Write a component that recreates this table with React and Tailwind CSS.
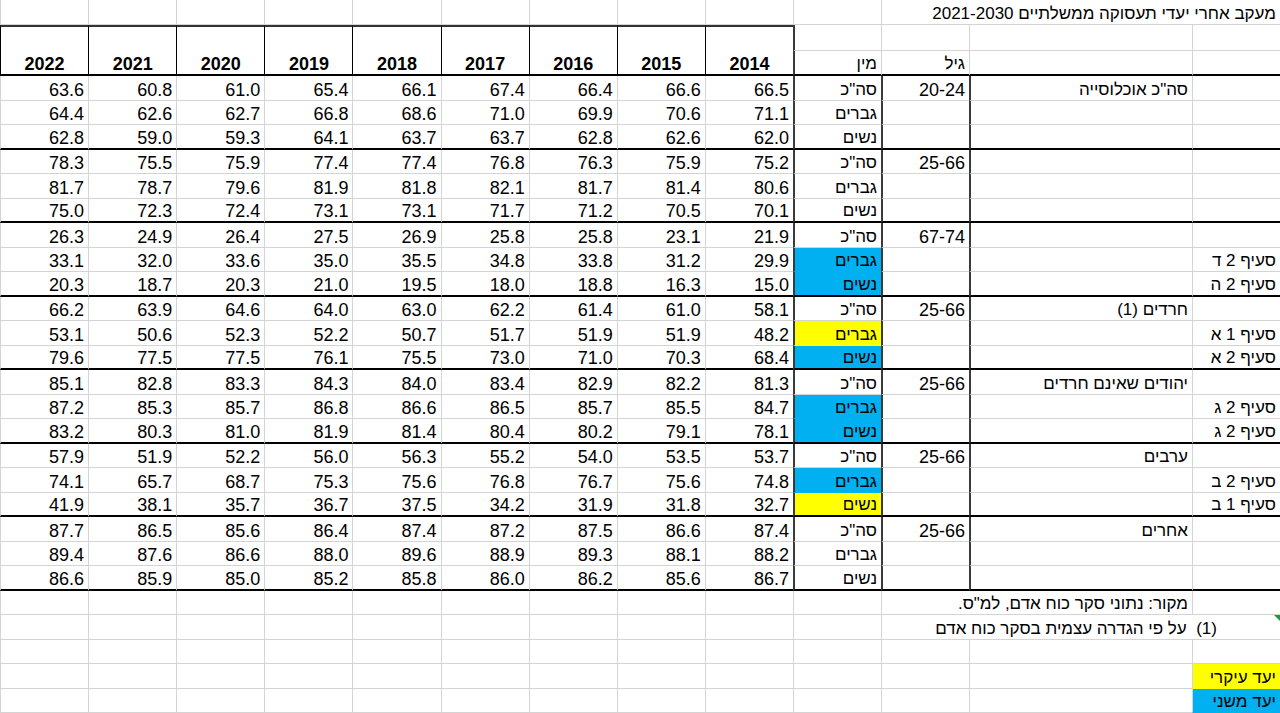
const years = ['2014', '2015', '2016', '2017', '2018', '2019', '2020', '2021', '2022']

const BLUE = 'bg-[#00b0f0]'
const YELLOW = 'bg-[#ffff00]'

const groups = [
  {
    name: 'סה"כ אוכלוסייה',
    age: '20-24',
    rows: [
      { sex: 'סה"כ', vals: ['66.5', '66.6', '66.4', '67.4', '66.1', '65.4', '61.0', '60.8', '63.6'] },
      { sex: 'גברים', vals: ['71.1', '70.6', '69.9', '71.0', '68.6', '66.8', '62.7', '62.6', '64.4'] },
      { sex: 'נשים', vals: ['62.0', '62.6', '62.8', '63.7', '63.7', '64.1', '59.3', '59.0', '62.8'] },
    ],
  },
  {
    name: '',
    age: '25-66',
    rows: [
      { sex: 'סה"כ', vals: ['75.2', '75.9', '76.3', '76.8', '77.4', '77.4', '75.9', '75.5', '78.3'] },
      { sex: 'גברים', vals: ['80.6', '81.4', '81.7', '82.1', '81.8', '81.9', '79.6', '78.7', '81.7'] },
      { sex: 'נשים', vals: ['70.1', '70.5', '71.2', '71.7', '73.1', '73.1', '72.4', '72.3', '75.0'] },
    ],
  },
  {
    name: '',
    age: '67-74',
    rows: [
      { sex: 'סה"כ', vals: ['21.9', '23.1', '25.8', '25.8', '26.9', '27.5', '26.4', '24.9', '26.3'] },
      { sex: 'גברים', fill: BLUE, note: 'סעיף 2 ד', vals: ['29.9', '31.2', '33.8', '34.8', '35.5', '35.0', '33.6', '32.0', '33.1'] },
      { sex: 'נשים', fill: BLUE, note: 'סעיף 2 ה', vals: ['15.0', '16.3', '18.8', '18.0', '19.5', '21.0', '20.3', '18.7', '20.3'] },
    ],
  },
  {
    name: 'חרדים (1)',
    age: '25-66',
    rows: [
      { sex: 'סה"כ', vals: ['58.1', '61.0', '61.4', '62.2', '63.0', '64.0', '64.6', '63.9', '66.2'] },
      { sex: 'גברים', fill: YELLOW, note: 'סעיף 1 א', vals: ['48.2', '51.9', '51.9', '51.7', '50.7', '52.2', '52.3', '50.6', '53.1'] },
      { sex: 'נשים', fill: BLUE, note: 'סעיף 2 א', vals: ['68.4', '70.3', '71.0', '73.0', '75.5', '76.1', '77.5', '77.5', '79.6'] },
    ],
  },
  {
    name: 'יהודים שאינם חרדים',
    age: '25-66',
    rows: [
      { sex: 'סה"כ', vals: ['81.3', '82.2', '82.9', '83.4', '84.0', '84.3', '83.3', '82.8', '85.1'] },
      { sex: 'גברים', fill: BLUE, note: 'סעיף 2 ג', vals: ['84.7', '85.5', '85.7', '86.5', '86.6', '86.8', '85.7', '85.3', '87.2'] },
      { sex: 'נשים', fill: BLUE, note: 'סעיף 2 ג', vals: ['78.1', '79.1', '80.2', '80.4', '81.4', '81.9', '81.0', '80.3', '83.2'] },
    ],
  },
  {
    name: 'ערבים',
    age: '25-66',
    rows: [
      { sex: 'סה"כ', vals: ['53.7', '53.5', '54.0', '55.2', '56.3', '56.0', '52.2', '51.9', '57.9'] },
      { sex: 'גברים', fill: BLUE, note: 'סעיף 2 ב', vals: ['74.8', '75.6', '76.7', '76.8', '75.6', '75.3', '68.7', '65.7', '74.1'] },
      { sex: 'נשים', fill: YELLOW, note: 'סעיף 1 ב', vals: ['32.7', '31.8', '31.9', '34.2', '37.5', '36.7', '35.7', '38.1', '41.9'] },
    ],
  },
  {
    name: 'אחרים',
    age: '25-66',
    rows: [
      { sex: 'סה"כ', vals: ['87.4', '86.6', '87.5', '87.2', '87.4', '86.4', '85.6', '86.5', '87.7'] },
      { sex: 'גברים', vals: ['88.2', '88.1', '89.3', '88.9', '89.6', '88.0', '86.6', '87.6', '89.4'] },
      { sex: 'נשים', vals: ['86.7', '85.6', '86.2', '86.0', '85.8', '85.2', '85.0', '85.9', '86.6'] },
    ],
  },
]

// one spreadsheet cell; each cell draws only its bottom and (physical) left edge
function Cell({ className = '', bottom = 'thin', left = 'light', fill, children }) {
  const b = bottom === 'thick' ? 'border-b-2 border-b-black' : fill ? 'border-b border-b-transparent' : 'border-b border-b-[#d4d4d4]'
  const l = left === 'dark' ? 'border-l-2 border-l-[#3a3a3a]' : left === 'none' ? '' : 'border-l border-l-[#d4d4d4]'
  return (
    <div className={`relative flex shrink-0 items-end justify-start whitespace-nowrap px-[4px] leading-[20px] ${b} ${l} ${fill || ''} ${className}`}>
      {children}
    </div>
  )
}

// hebrew text runs a touch narrower than the digits in the sheet
const heb = 'text-[17px]'

function EmptyYears({ bottom }) {
  return years.map((y) => <Cell key={y} bottom={bottom} className="flex-1 basis-0 shrink" />)
}

export default function App() {
  return (
    <div
      dir="rtl"
      className="h-[713px] w-[1280px] overflow-hidden bg-white font-['Liberation_Sans',Arial,sans-serif] text-[18px] text-black"
    >
      {/* title row */}
      <div className="flex h-[25px]">
        <Cell className={`w-[399px] ${heb}`}>מעקב אחרי יעדי תעסוקה ממשלתיים 2021-2030</Cell>
        <Cell className="w-[88px]" />
        <EmptyYears />
      </div>

      {/* header */}
      <div className="flex h-[51px]">
        <div className="flex w-[487px] shrink-0 flex-col">
          <div className="flex h-[26px]">
            <Cell className="w-[88px]" />
            <Cell className="w-[223px]" />
            <Cell className="w-[88px]" />
            <Cell className="w-[88px]" left="dark" />
          </div>
          <div className="flex h-[25px]">
            <Cell className="w-[88px]" bottom="thick" />
            <Cell className="w-[223px]" bottom="thick" />
            <Cell className={`w-[88px] ${heb}`} bottom="thick">גיל</Cell>
            <Cell className={`w-[88px] ${heb}`} bottom="thick" left="dark">מין</Cell>
          </div>
        </div>
        <div className="flex flex-1">
          {years.map((y) => (
            <div
              key={y}
              className="flex flex-1 basis-0 items-end justify-center border-t-2 border-b-2 border-l border-t-[#333] border-b-black border-l-black font-bold leading-[20px]"
            >
              {y}
            </div>
          ))}
        </div>
      </div>

      {/* data */}
      {groups.map((g, gi) =>
        g.rows.map((r, ri) => {
          const bottom = ri === g.rows.length - 1 ? 'thick' : 'thin'
          return (
            <div key={`${gi}-${ri}`} className="flex h-[24.5px]">
              <Cell className={`w-[88px] ${heb}`} bottom={bottom}>{r.note}</Cell>
              <Cell className={`w-[223px] ${heb}`} bottom={bottom} left="dark">{ri === 0 ? g.name : ''}</Cell>
              <Cell className="w-[88px]" bottom={bottom} left="dark">{ri === 0 ? g.age : ''}</Cell>
              <Cell className={`w-[88px] ${heb}`} bottom={bottom} left="dark" fill={r.fill}>
                {r.sex}
              </Cell>
              {r.vals.map((v, vi) => (
                <Cell key={vi} bottom={bottom} className="flex-1 basis-0 shrink">{v}</Cell>
              ))}
            </div>
          )
        })
      )}

      {/* notes */}
      <div className="flex h-[24.5px]">
        <Cell className="w-[88px]" />
        <Cell className={`w-[311px] ${heb}`}>מקור: נתוני סקר כוח אדם, למ"ס.</Cell>
        <Cell className="w-[88px]" />
        <EmptyYears />
      </div>
      <div className="flex h-[24.5px]">
        <Cell className={`w-[399px] pr-[63px] ${heb}`}>
          (1)&nbsp; על פי הגדרה עצמית בסקר כוח אדם
          <span className="absolute right-0 top-0 h-0 w-0 border-l-[6px] border-t-[6px] border-l-transparent border-t-[#1e9a3c]" />
        </Cell>
        <Cell className="w-[88px]" />
        <EmptyYears />
      </div>
      <div className="flex h-[24.5px]">
        <Cell className="w-[88px]" />
        <Cell className="w-[223px]" />
        <Cell className="w-[88px]" />
        <Cell className="w-[88px]" />
        <EmptyYears />
      </div>
      <div className="flex h-[24.5px]">
        <Cell className={`w-[88px] ${heb}`} fill={YELLOW}>יעד עיקרי</Cell>
        <Cell className="w-[223px]" />
        <Cell className="w-[88px]" />
        <Cell className="w-[88px]" />
        <EmptyYears />
      </div>
      <div className="flex h-[24.5px]">
        <Cell className={`w-[88px] ${heb}`} fill={BLUE}>יעד משני</Cell>
        <Cell className="w-[223px]" />
        <Cell className="w-[88px]" />
        <Cell className="w-[88px]" />
        <EmptyYears />
      </div>
    </div>
  )
}
